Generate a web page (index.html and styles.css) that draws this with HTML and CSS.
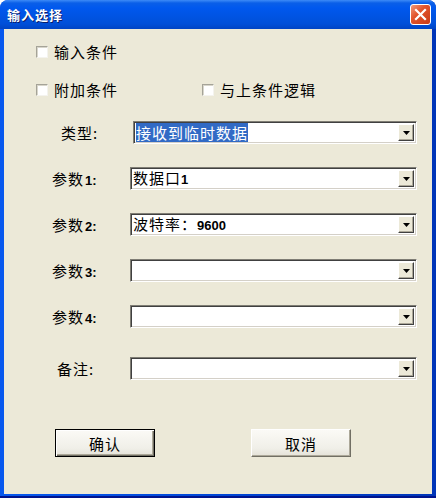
FILE: index.html
```html
<!DOCTYPE html>
<html lang="zh-CN">
  <head>
    <meta charset="UTF-8" />
    <title>输入选择</title>
    <link rel="stylesheet" href="styles.css">
  </head>
  <body>
    <div class="window">
      <div class="titlebar">
        <span class="title">输入选择</span>
        <span class="close">
          <svg width="13" height="13" viewBox="0 0 13 13">
            <path d="M2 2 L11 11 M11 2 L2 11" stroke="#fff" stroke-width="2.2" stroke-linecap="square" />
          </svg>
        </span>
      </div>

      <div class="client">
        <div class="checks">
          <label class="check"><span class="box"></span>输入条件</label>
        </div>
        <div class="checks checks-two">
          <label class="check"><span class="box"></span>附加条件</label>
          <label class="check"><span class="box"></span>与上条件逻辑</label>
        </div>

        <div class="form">
          <div class="row row-type">
            <span class="label">类型:</span>
            <div class="combo">
              <span class="value"><span class="selected">接收到临时数据</span></span>
              <span class="arrow"><svg width="7" height="4" viewBox="0 0 7 4"><path d="M0 0 H7 L3.5 4 Z" fill="#000" /></svg></span>
            </div>
          </div>
          <div class="row">
            <span class="label">参数<b class="num">1:</b></span>
            <div class="combo">
              <span class="value">数据口<b class="num">1</b></span>
              <span class="arrow"><svg width="7" height="4" viewBox="0 0 7 4"><path d="M0 0 H7 L3.5 4 Z" fill="#000" /></svg></span>
            </div>
          </div>
          <div class="row">
            <span class="label">参数<b class="num">2:</b></span>
            <div class="combo">
              <span class="value">波特率：<b class="num">9600</b></span>
              <span class="arrow"><svg width="7" height="4" viewBox="0 0 7 4"><path d="M0 0 H7 L3.5 4 Z" fill="#000" /></svg></span>
            </div>
          </div>
          <div class="row">
            <span class="label">参数<b class="num">3:</b></span>
            <div class="combo">
              <span class="value"></span>
              <span class="arrow"><svg width="7" height="4" viewBox="0 0 7 4"><path d="M0 0 H7 L3.5 4 Z" fill="#000" /></svg></span>
            </div>
          </div>
          <div class="row">
            <span class="label">参数<b class="num">4:</b></span>
            <div class="combo">
              <span class="value"></span>
              <span class="arrow"><svg width="7" height="4" viewBox="0 0 7 4"><path d="M0 0 H7 L3.5 4 Z" fill="#000" /></svg></span>
            </div>
          </div>
          <div class="row row-note">
            <span class="label">备注:</span>
            <div class="combo">
              <span class="value"></span>
              <span class="arrow"><svg width="7" height="4" viewBox="0 0 7 4"><path d="M0 0 H7 L3.5 4 Z" fill="#000" /></svg></span>
            </div>
          </div>
        </div>

        <div class="buttons">
          <button class="btn btn-default">确认</button>
          <button class="btn">取消</button>
        </div>
      </div>
    </div>
  </body>
</html>
```

FILE: styles.css
```css
* {
  margin: 0;
  padding: 0;
  box-sizing: border-box;
}
body {
  font-family: "Noto Sans CJK SC", sans-serif;
  background: #fff;
  width: 436px;
  height: 498px;
}

.window {
  width: 436px;
  height: 498px;
  display: flex;
  flex-direction: column;
  border-radius: 8px 8px 0 0;
  overflow: hidden;
  background: linear-gradient(to right, #0758ee 0, #0046d6 50%, #0035b8 100%);
  box-shadow: inset 0 -2px #00138c;
}

.titlebar {
  height: 29px;
  display: flex;
  align-items: center;
  justify-content: space-between;
  padding: 0 5px 0 7px;
  background: linear-gradient(#3d8bf7 0, #0a5fe8 3px, #0058ee 8px, #0054e3 16px, #004fd8 24px, #0044c4 29px);
}
.title {
  color: #fff;
  font-size: 13px;
  font-weight: bold;
  letter-spacing: 1px;
  text-shadow: 1px 1px #0a1e6a;
}
.close {
  width: 21px;
  height: 21px;
  border: 1px solid #fff;
  border-radius: 3px;
  background: linear-gradient(135deg, #f09a7c 0, #e2542c 40%, #c93a16 100%);
  display: flex;
  align-items: center;
  justify-content: center;
}

.client {
  flex: 1;
  margin: 0 4px 4px;
  background: #ece9d8;
  font-size: 15px;
  letter-spacing: 1px;
  color: #000;
}

.checks {
  display: grid;
  grid-template-columns: 166px 1fr;
  padding-left: 32px;
  height: 20px;
  margin-top: 13px;
  align-items: center;
}
.checks-two {
  margin-top: 18px;
}
.check {
  display: flex;
  align-items: center;
  gap: 6px;
  line-height: 20px;
}
.box {
  width: 12px;
  height: 12px;
  background: #fff;
  border: 1px solid;
  border-color: #a5a398 #f4f3ee #f4f3ee #a5a398;
  box-shadow: inset 1px 1px #d8d6cb;
}

.form {
  display: flex;
  flex-direction: column;
  gap: 23px;
  margin-top: 21px;
}
.row {
  display: grid;
  grid-template-columns: 126px 1fr;
  align-items: center;
  padding-right: 15px;
  height: 23px;
}
.row .label {
  padding-left: 48px;
}
.row-type {
  grid-template-columns: 129px 1fr;
}
.row-type .label {
  padding-left: 57px;
}
.row-note {
  margin-top: 6px;
}
.row-note .label {
  padding-left: 53px;
}
.num {
  font-family: "Liberation Sans", sans-serif;
  font-size: 13px;
  letter-spacing: 0;
}
.label .num {
  margin-left: 1px;
}

.combo {
  height: 23px;
  display: flex;
  align-items: center;
  background: #fff;
  border: 1px solid;
  border-color: #7f7d74 #fff #fff #7f7d74;
  box-shadow: inset 1px 1px #404040, inset -1px -1px #d4d0c8;
  padding: 2px;
}
.value {
  flex: 1;
  line-height: 19px;
  white-space: nowrap;
}
.selected {
  display: inline-block;
  background: #316ac5;
  color: #fff;
  line-height: 19px;
}
.arrow {
  width: 16px;
  height: 17px;
  display: flex;
  align-items: center;
  justify-content: center;
  background: #ece9d8;
  border: 1px solid;
  border-color: #fff #404040 #404040 #fff;
  box-shadow: inset -1px -1px #aca899;
}

.buttons {
  display: flex;
  gap: 96px;
  padding-left: 51px;
  margin-top: 49px;
}
.btn {
  width: 100px;
  height: 28px;
  font-family: "Noto Sans CJK SC", sans-serif;
  font-size: 15px;
  letter-spacing: 1px;
  color: #000;
  background: linear-gradient(#fbfaf6, #f0efe8 70%, #e4e2d8);
  border: 1px solid;
  border-color: #fff #716f64 #716f64 #fff;
  box-shadow: inset -1px -1px #aca899;
}
.btn-default {
  border: 1px solid #000;
  box-shadow: inset 1px 1px #fff, inset -1px -1px #716f64, inset -2px -2px #aca899;
}
```
